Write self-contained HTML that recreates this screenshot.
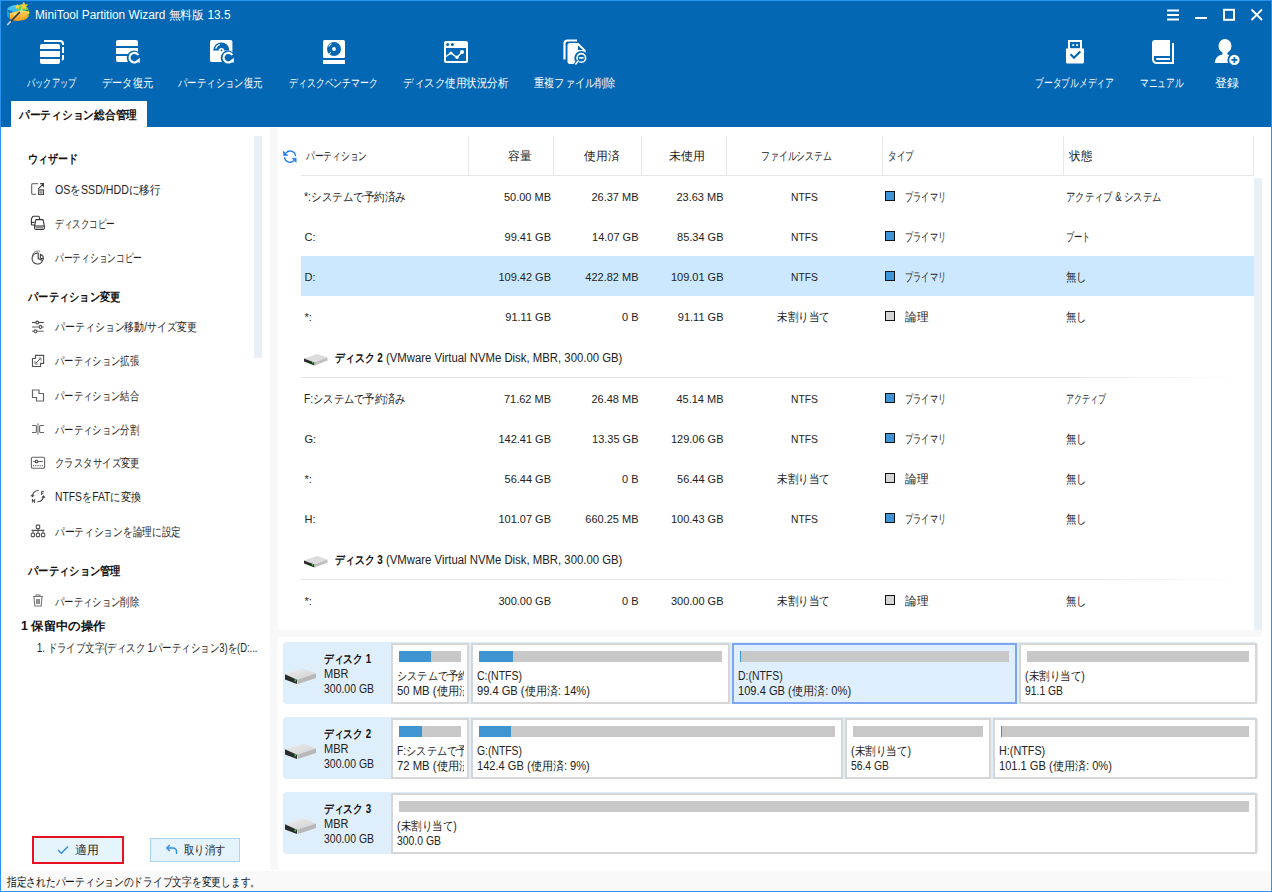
<!DOCTYPE html>
<html><head><meta charset="utf-8">
<style>
*{margin:0;padding:0;box-sizing:border-box}
html,body{width:1272px;height:892px;overflow:hidden;background:#fff}
body{position:relative;font-family:"Liberation Sans",sans-serif;font-size:12px;color:#222}
.a{position:absolute}
.t{position:absolute;white-space:nowrap;line-height:14px}
#win{position:absolute;left:0;top:0;width:1272px;height:892px;border:1px solid #2a93ee;background:#fff}
#hdr{position:absolute;left:1px;top:1px;width:1270px;height:126px;background:#0467b3}
.wt{color:#fff}
.tb{position:absolute;top:77px;color:#fff;font-size:12px;line-height:14px;white-space:nowrap;transform:translateX(-50%)}
.ic{position:absolute}
#tab{position:absolute;left:11px;top:101px;width:136px;height:26px;background:#fff}
#left{position:absolute;left:1px;top:127px;width:269px;height:744px;background:#fff}
#div1{position:absolute;left:270px;top:128px;width:8px;height:742px;background:#f8f8f8}
#tbl{position:absolute;left:278px;top:127px;width:993px;height:503px;background:#fff}
#band{position:absolute;left:278px;top:630px;width:984px;height:7px;background:#f8f8f8}
#map{position:absolute;left:278px;top:637px;width:993px;height:234px;background:#fff}
#status{position:absolute;left:2px;top:871px;width:1268px;height:20px;background:#f9f9f9}
.sb{position:absolute;background:#e8eff7}
.hd{font-weight:bold;color:#111}
.li{color:#1e1e1e}
.sel{position:absolute;left:301px;top:256px;width:953px;height:40px;background:#cce8ff}
.r{text-align:right}
.num{font-size:11px}
.sq{position:absolute;width:10px;height:10px;border:1px solid #111}
.dk{position:absolute;left:283px;width:975px;height:62px;background:#dfeefb;border-radius:4px}
.pb{position:absolute;border:2px solid #d6d6d6;background:#fff;overflow:hidden}
.bar{position:absolute;left:6px;top:6px;height:11px;background:#c8c8c8}
.bar i{position:absolute;left:0;top:0;height:11px;background:#3e95d1}
.clip{position:absolute;left:0;top:0;right:3px;bottom:0;overflow:hidden}
.pt{position:absolute;left:3px;white-space:nowrap;line-height:14px;color:#222}
</style></head><body>
<div id="win"></div>
<div id="hdr"></div>
<div id="tab"></div>
<!-- title bar -->
<svg class="a" style="left:0px;top:0px" width="34" height="28" viewBox="0 0 34 28">
 <defs>
  <linearGradient id="ao" x1="0" y1="0" x2="0" y2="1"><stop offset="0" stop-color="#ffd35a"/><stop offset="1" stop-color="#f59a1b"/></linearGradient>
  <linearGradient id="ac" x1="0" y1="0" x2="0" y2="1"><stop offset="0" stop-color="#5fd0f7"/><stop offset="1" stop-color="#1ba6ea"/></linearGradient>
 </defs>
 <path d="M7 9.5 A11 5 0 0 1 18 5 L18 14 Z" fill="url(#ac)"/>
 <path d="M7 9.5 V16 A11 6 0 0 0 10 19 L10 13Z" fill="#16a0e6"/>
 <path d="M18 5 A11 5 0 0 1 28.7 9.5 L18 13Z" fill="#5cd25a"/>
 <path d="M10 13 L18 11 L28.7 11 V16 A11 6 0 0 1 10 19 Z" fill="url(#ao)"/>
 <path d="M28.7 9.5 V16 A3 3 0 0 1 27.5 17.5 V11Z" fill="#4cbf4a"/>
 <path d="M23.8 1.8 l1.25 2.6 2.85 .35 -2.1 1.95 .55 2.8 -2.55 -1.4 -2.55 1.4 .55 -2.8 -2.1 -1.95 2.85 -.35z" fill="#fbd440" stroke="#e9b520" stroke-width=".4"/>
 <path d="M17.5 3.8 l.85 1.75 1.95 .25 -1.45 1.3 .4 1.9 -1.75 -.95 -1.75 .95 .4 -1.9 -1.45 -1.3 1.95 -.25z" fill="#fbd440"/>
 <path d="M28.2 10.8 l.6 1.2 1.3 .2 -1 .9 .25 1.3 -1.15 -.65 -1.15 .65 .25 -1.3 -1 -.9 1.3 -.2z" fill="#fbd440"/>
 <path d="M15 12 l.6 1.2 1.3 .2 -1 .9 .25 1.3 -1.15 -.65 -1.15 .65 .25 -1.3 -1 -.9 1.3 -.2z" fill="#fde27a"/>
 <line x1="7.2" y1="25.1" x2="22.4" y2="9.4" stroke="#d6d6d6" stroke-width="1.5"/>
 <line x1="10.8" y1="21.4" x2="19.8" y2="12.1" stroke="#3a3a3a" stroke-width="1.6"/>
</svg>
<div class="t f wt" style="left:34.6px;top:8px;font-size:12px;--w:195.5px">MiniTool Partition Wizard 無料版 13.5</div>
<svg class="a" style="left:1160px;top:6px" width="110" height="18" viewBox="0 0 110 18">
 <rect x="7" y="3.5" width="12" height="2" fill="#fff"/><rect x="7" y="8" width="12" height="2" fill="#fff"/><rect x="7" y="12.5" width="12" height="2" fill="#fff"/>
 <rect x="35" y="11" width="12" height="2" fill="#fff"/>
 <rect x="64" y="3.8" width="10" height="10" fill="none" stroke="#fff" stroke-width="2"/>
 <path d="M91.5 3.5 L102 14 M102 3.5 L91.5 14" stroke="#fff" stroke-width="1.8"/>
</svg>
<!-- toolbar icons -->
<svg class="a" style="left:40px;top:40px" width="24" height="24" viewBox="0 0 24 24" fill="#fff">
 <path d="M2 4 H18 A2 2 0 0 1 20 6 V9 H0 V6 A2 2 0 0 1 2 4Z"/>
 <rect x="0" y="11" width="20" height="6"/>
 <path d="M0 19 H20 V22 A2 2 0 0 1 18 24 H2 A2 2 0 0 1 0 22Z"/>
 <path d="M4 1 H20 A3 3 0 0 1 23 4 V5" fill="none" stroke="#fff" stroke-width="2"/>
 <path d="M23 7 V13 M23 15 V18 A2 2 0 0 1 22 20" fill="none" stroke="#fff" stroke-width="2"/>
</svg>
<svg class="a" style="left:116px;top:40px" width="26" height="24" viewBox="0 0 26 24" fill="#fff">
 <path d="M2 0 H20 A2 2 0 0 1 22 2 V6 H0 V2 A2 2 0 0 1 2 0Z"/>
 <rect x="0" y="8" width="22" height="6"/>
 <path d="M0 16 H22 V22 H2 A2 2 0 0 1 0 20Z"/>
 <circle cx="18" cy="17.8" r="7.3" fill="#0467b3"/>
 <path d="M22.3 15 A4.8 4.8 0 1 0 22.5 20" fill="none" stroke="#fff" stroke-width="2.1"/>
 <path d="M23.8 17.8 L23.8 22.8 L19.5 21.4Z"/>
</svg>
<svg class="a" style="left:210px;top:40px" width="26" height="24" viewBox="0 0 26 24" fill="#fff">
 <rect x="0" y="0" width="22.4" height="22" rx="1.8"/>
 <path d="M3.2 10.6 A8.1 8.1 0 0 1 19.4 10.6 Z" fill="#0467b3"/>
 <path d="M8.5 10.8 A2.9 2.9 0 0 1 14.3 10.8 Z" fill="#fff"/>
 <circle cx="11.4" cy="10.4" r="0.8" fill="#0467b3"/>
 <path d="M5.7 8.6 A6 6 0 0 1 10 4.4" fill="none" stroke="#fff" stroke-width="1.3"/>
 <circle cx="18" cy="17.8" r="7.3" fill="#0467b3"/>
 <path d="M22.3 15 A4.8 4.8 0 1 0 22.5 20" fill="none" stroke="#fff" stroke-width="2.1"/>
 <path d="M23.8 17.8 L23.8 22.8 L19.5 21.4Z"/>
</svg>
<svg class="a" style="left:323px;top:40px" width="22" height="24" viewBox="0 0 22 24" fill="#fff">
 <rect x="0" y="0" width="22" height="18" rx="1.5"/>
 <circle cx="11" cy="9" r="7" fill="#0467b3"/>
 <circle cx="11" cy="9" r="1.9"/>
 <path d="M5.8 6.5 A5.5 5.5 0 0 1 8.4 3.8" fill="none" stroke="#fff" stroke-width="1.2"/>
 <path d="M8 12 L5 15.5" stroke="#fff" stroke-width="1"/>
 <rect x="0" y="20" width="22" height="4"/>
</svg>
<svg class="a" style="left:444px;top:41px" width="24" height="22" viewBox="0 0 24 22" fill="#fff">
 <rect x="0" y="0" width="24" height="22" rx="2"/>
 <rect x="2" y="7" width="20" height="13" fill="#0467b3"/>
 <circle cx="3.6" cy="3.4" r="1.5" fill="#0467b3"/><circle cx="8.4" cy="3.4" r="1.5" fill="#0467b3"/>
 <polyline points="2,15.5 7,12 13,16.5 18,11" fill="none" stroke="#fff" stroke-width="1.5"/>
 <circle cx="7" cy="12" r="1.6"/><circle cx="13" cy="16.3" r="1.7"/><circle cx="18" cy="11" r="2"/>
</svg>
<svg class="a" style="left:563px;top:39px" width="26" height="27" viewBox="0 0 26 27" fill="#fff">
 <path d="M1.5 20.5 V4.5 A3 3 0 0 1 4.5 1.5 H14" fill="none" stroke="#fff" stroke-width="2.2"/>
 <path d="M7 4 H15.5 L22.6 11 V22.5 A2.5 2.5 0 0 1 20 25 H7 A2.5 2.5 0 0 1 4.5 22.5 V6.5 A2.5 2.5 0 0 1 7 4Z"/>
 <path d="M15 6.5 V11 H20Z" fill="#0467b3"/>
 <circle cx="18.3" cy="18.9" r="7" fill="#0467b3"/>
 <circle cx="18.3" cy="18.9" r="4.3" fill="none" stroke="#fff" stroke-width="1.6"/>
 <rect x="16" y="18.1" width="4.6" height="1.6"/>
 <path d="M15.4 21.8 L12 25.8" stroke="#0467b3" stroke-width="3.4"/><path d="M15.4 21.8 L12.4 25.4" stroke="#fff" stroke-width="1.6"/>
</svg>
<svg class="a" style="left:1066px;top:40px" width="18" height="24" viewBox="0 0 18 24" fill="#fff">
 <rect x="2" y="0" width="14" height="9"/>
 <rect x="4" y="2" width="10" height="6.4" fill="#0467b3"/>
 <rect x="6.2" y="4.3" width="2" height="1.6"/><rect x="10" y="4.3" width="2" height="1.6"/>
 <path d="M0 8.4 H18 V22 A1.6 1.6 0 0 1 16.4 23.6 H1.6 A1.6 1.6 0 0 1 0 22Z"/>
 <polyline points="4.5,14.3 8,17.8 14.3,11.5" fill="none" stroke="#0467b3" stroke-width="2"/>
</svg>
<svg class="a" style="left:1152px;top:40px" width="22" height="24" viewBox="0 0 22 24" fill="#fff">
 <path d="M3 0 H18 V16 H0 V3 A3 3 0 0 1 3 0Z"/>
 <path d="M1 10 V19.5 A3.5 3.5 0 0 0 4.5 23 H21 V3" fill="none" stroke="#fff" stroke-width="2"/>
 <path d="M5 18 H18 V20 H5 A1 1 0 0 1 5 18Z"/>
</svg>
<svg class="a" style="left:1214px;top:38px" width="26" height="28" viewBox="0 0 26 28" fill="#fff">
 <ellipse cx="11" cy="8" rx="6.5" ry="7"/>
 <rect x="8.5" y="13" width="5" height="4"/>
 <path d="M0.5 25 Q1.5 17 9 16.5 H13 Q17 17 20 19 V25Z"/>
 <circle cx="20.4" cy="21.9" r="7" fill="#0467b3"/>
 <circle cx="20.4" cy="21.9" r="5.2"/>
 <path d="M20.4 18.9 V24.9 M17.4 21.9 H23.4" stroke="#0467b3" stroke-width="1.7"/>
</svg>
<!-- toolbar labels -->
<div class="t f wt" style="left:26.9px;top:75.5px;--w:49.1px">バックアップ</div>
<div class="t f wt" style="left:101.8px;top:75.5px;--w:51.2px">データ復元</div>
<div class="t f wt" style="left:178px;top:75.5px;--w:84.5px">パーティション復元</div>
<div class="t f wt" style="left:288.5px;top:75.5px;--w:88.8px">ディスクベンチマーク</div>
<div class="t f wt" style="left:402.8px;top:75.5px;--w:105.2px">ディスク使用状況分析</div>
<div class="t f wt" style="left:533.8px;top:75.5px;--w:81.7px">重複ファイル削除</div>
<div class="t f wt" style="left:1034.8px;top:75.5px;--w:78.9px">ブータブルメディア</div>
<div class="t f wt" style="left:1140px;top:75.5px;--w:43.7px">マニュアル</div>
<div class="t f wt" style="left:1214.5px;top:75.5px;--w:23.8px">登録</div>
<div class="t f hd" style="left:19.4px;top:107.8px;font-size:12px;--w:118.2px">パーティション総合管理</div>

<div id="left"></div>
<div id="div1"></div>
<div class="t f hd" style="left:27.5px;top:151.5px;--w:50.0px">ウィザード</div>
<div class="t f li" style="left:55px;top:182.6px;--w:105.7px">OSをSSD/HDDに移行</div>
<div class="t f li" style="left:55px;top:216.8px;--w:59.9px">ディスクコピー</div>
<div class="t f li" style="left:55px;top:250.9px;--w:87.0px">パーティションコピー</div>
<div class="t f hd" style="left:28px;top:289.9px;--w:92.6px">パーティション変更</div>
<div class="t f li" style="left:55px;top:320.2px;--w:141.6px">パーティション移動/サイズ変更</div>
<div class="t f li" style="left:55px;top:354.3px;--w:84.1px">パーティション拡張</div>
<div class="t f li" style="left:55px;top:388.5px;--w:84.1px">パーティション結合</div>
<div class="t f li" style="left:55px;top:422.6px;--w:84.1px">パーティション分割</div>
<div class="t f li" style="left:55px;top:456.2px;--w:84.8px">クラスタサイズ変更</div>
<div class="t f li" style="left:55px;top:490.2px;--w:86.3px">NTFSをFATに変換</div>
<div class="t f li" style="left:55px;top:524.5px;--w:126.0px">パーティションを論理に設定</div>
<div class="t f hd" style="left:28px;top:564.0px;--w:92.7px">パーティション管理</div>
<div class="t f li" style="left:55px;top:594.7px;--w:84.2px">パーティション削除</div>
<div class="t f hd" style="left:20.6px;top:619.2px;--w:84.6px">1 保留中の操作</div>
<div class="t f li" style="left:37.4px;top:640.6px;--w:220.5px">1. ドライブ文字(ディスク 1パーティション3)を(D:...</div>
<svg class="a" style="left:28px;top:180px" width="20" height="20" viewBox="0 0 20 20" fill="none" stroke-linecap="round">
 <path d="M9.6 3.7 H5 Q3.6 3.7 3.6 5.1 V13 Q3.6 14.3 5 14.3 H7.8" stroke="#7a7a7a" stroke-width="1.3"/>
 <path d="M10.6 8.6 L15 4.2 M12.6 3.7 H15.4 V6.6" stroke="#444" stroke-width="1.2"/>
 <rect x="10.6" y="9.9" width="4.9" height="4.5" stroke="#444" stroke-width="1.1"/>
 <path d="M13 9.9 V14.4 M10.6 12.1 H15.5" stroke="#777" stroke-width="0.9"/>
</svg>
<svg class="a" style="left:28px;top:213px" width="20" height="20" viewBox="0 0 20 20" fill="none" stroke="#333" stroke-width="1.1" stroke-linejoin="round">
 <path d="M7.2 12 H4.2 Q3.4 12 3.4 11 V6 L4.4 3.9 Q4.7 3.3 5.4 3.3 H10.3 Q10.9 3.3 11.2 4 L11.8 6.3"/>
 <path d="M3.5 9.4 H6.6"/>
 <path d="M8.5 6.6 H14.4 Q15 6.6 15.3 7.3 L16.3 13 V15.3 Q16.3 16.5 15 16.5 H7.8 Q6.6 16.5 6.6 15.3 V13 L7.6 7.3 Q7.9 6.6 8.5 6.6Z" fill="#fff"/>
 <path d="M6.6 13 H16.3"/>
 <rect x="7.8" y="14" width="7.3" height="1.5" fill="#888" stroke="none"/>
</svg>
<svg class="a" style="left:28px;top:247px" width="20" height="20" viewBox="0 0 20 20" fill="none" stroke="#444" stroke-width="1.1">
 <path d="M4.4 9.2 A5.6 5.6 0 0 1 12.6 4.6" stroke="#666" stroke-dasharray="1.6 .6"/>
 <path d="M10.2 6.2 A5.4 5.4 0 1 0 14.6 13.4 L10.2 11.6 Z" stroke-width="1.2"/>
 <path d="M12.4 7.2 A4.6 4.6 0 0 1 15.4 12 L12.4 11 Z" stroke-width="1.1"/>
</svg>
<svg class="a" style="left:28px;top:316px" width="20" height="20" viewBox="0 0 20 20" fill="none" stroke-width="1.1">
 <path d="M4 6.5 H15.8" stroke="#444"/><circle cx="9.2" cy="6.5" r="1.4" fill="#fff" stroke="#444"/>
 <path d="M4 11 H15.8" stroke="#a0a0a0" stroke-width="1.7"/><ellipse cx="12.5" cy="11" rx="1.2" ry="1.6" fill="#fff" stroke="#555"/>
 <path d="M4 15.3 H15.8" stroke="#8a8a8a" stroke-width="1.3"/><circle cx="7.5" cy="15.3" r="1.4" fill="#fff" stroke="#555"/>
</svg>
<svg class="a" style="left:28px;top:351px" width="20" height="20" viewBox="0 0 20 20" fill="none" stroke="#555" stroke-width="1.15">
 <path d="M4.5 7.5 H7.5 V4.4 H15.6 V12.4 H12.5 V15.5 H4.5 Z"/>
 <path d="M7.6 12.4 L12.6 7.4" stroke-width="1"/><path d="M7 10 V13 H10 M10.5 7 H13 V9.6" stroke="#777" stroke-width="1"/>
</svg>
<svg class="a" style="left:31px;top:389px" width="14" height="13" viewBox="0 0 14 13" fill="none" stroke="#666" stroke-width="1.2">
 <path d="M1.5 1 H8 V4.5 H12.5 V12 H5.5 V8.5 H1.5 Z"/>
</svg>
<svg class="a" style="left:28px;top:419px" width="20" height="20" viewBox="0 0 20 20" fill="none" stroke-width="1.1">
 <path d="M4 6.5 H7.3 Q8.4 6.5 8.4 7.6 V12.4 Q8.4 13.5 7.3 13.5 H4 M16 6.5 H12.7 Q11.6 6.5 11.6 7.6 V12.4 Q11.6 13.5 12.7 13.5 H16" stroke="#666"/>
 <path d="M10 4.2 V15.7" stroke="#aaa" stroke-width="1.7"/>
</svg>
<svg class="a" style="left:28px;top:453px" width="20" height="20" viewBox="0 0 20 20" fill="none" stroke="#666" stroke-width="1.1">
 <rect x="3.4" y="4.3" width="13.2" height="11" rx="1.3"/>
 <path d="M5.2 8.5 H14.8"/><circle cx="8.5" cy="8.5" r="1.3" fill="#fff" stroke="#444"/>
 <path d="M5 12.6 H15" stroke-dasharray="1.1 1.1" stroke-width="1.2"/>
</svg>
<svg class="a" style="left:28px;top:486px" width="20" height="20" viewBox="0 0 20 20" fill="none" stroke="#444" stroke-width="1.1">
 <path d="M10.5 4.5 A5.8 5.8 0 0 0 4.5 9.8"/><path d="M2.9 9.2 H6.1 L4.5 11.2Z" fill="#444" stroke-width=".6"/>
 <path d="M9.4 15.8 A5.8 5.8 0 0 0 15.5 10.8"/><path d="M13.9 11.4 H17.1 L15.5 9.5Z" fill="#444" stroke-width=".6"/>
 <path d="M13.6 9 V5.4 H15.8 M13.6 7.3 H15.4" stroke-width="1"/>
 <path d="M4.4 16.6 V13.1 L6.6 16.6 V13.1" stroke-width="1"/>
</svg>
<svg class="a" style="left:28px;top:520px" width="20" height="20" viewBox="0 0 20 20" fill="none" stroke="#555" stroke-width="1.1">
 <rect x="8.3" y="5.1" width="3.4" height="3.5" rx=".6"/><path d="M10 8.6 V10.4 M3.6 10.4 H16.4 M4.9 10.4 V13.2 M10 10.4 V13.2 M15.1 10.4 V13.2"/>
 <rect x="3.3" y="13.2" width="3.2" height="3.4" rx=".6"/><rect x="8.4" y="13.2" width="3.2" height="3.4" rx=".6"/><rect x="13.5" y="13.2" width="3.2" height="3.4" rx=".6"/>
</svg>
<svg class="a" style="left:32px;top:594px" width="12" height="13" viewBox="0 0 12 13" fill="none" stroke="#777" stroke-width="1.1">
 <path d="M1 2.5 H11 M4 2.5 V1 H8 V2.5"/><path d="M2 2.5 L2.8 12 H9.2 L10 2.5"/><path d="M4.7 5 V10 M6 5 V10 M7.3 5 V10"/>
</svg>
<div class="sb" style="left:254px;top:136px;width:8px;height:222px"></div>

<div id="tbl"></div>
<div class="a" style="left:301px;top:175px;width:953px;height:1px;background:#e6e6e6"></div>
<div class="a" style="left:468px;top:136px;width:1px;height:39px;background:#e8e8e8"></div>
<div class="a" style="left:553px;top:136px;width:1px;height:39px;background:#e8e8e8"></div>
<div class="a" style="left:641px;top:136px;width:1px;height:39px;background:#e8e8e8"></div>
<div class="a" style="left:726px;top:136px;width:1px;height:39px;background:#e8e8e8"></div>
<div class="a" style="left:882px;top:136px;width:1px;height:39px;background:#e8e8e8"></div>
<div class="a" style="left:1063px;top:136px;width:1px;height:39px;background:#e8e8e8"></div>
<div class="a" style="left:1253px;top:136px;width:1px;height:40px;background:#e6e6e6"></div>
<svg class="a" style="left:280px;top:146px" width="20" height="20" viewBox="0 0 20 20" fill="none" stroke="#1f7ce8" stroke-width="1.4">
 <path d="M15.6 10.3 A5.5 5.5 0 0 0 6 6.9"/><path d="M3.3 5 L3.5 9.5 L8 9.5Z" fill="#1f7ce8" stroke-width=".5"/>
 <path d="M4.5 11.2 A5.5 5.5 0 0 0 14 14.4"/><path d="M12 12.2 L16.2 12.2 L16.2 16.4Z" fill="#1f7ce8" stroke-width=".5"/>
</svg>
<div class="t f " style="left:306.3px;top:148.5px;--w:61.2px">パーティション</div>
<div class="t f " style="left:508.3px;top:148.5px;--w:23.7px">容量</div>
<div class="t f " style="left:584.4px;top:148.5px;--w:35.3px">使用済</div>
<div class="t f " style="left:669.3px;top:148.5px;--w:36.0px">未使用</div>
<div class="t f " style="left:760.9px;top:148.5px;--w:70.8px">ファイルシステム</div>
<div class="t f " style="left:888.3px;top:148.5px;--w:25.8px">タイプ</div>
<div class="t f " style="left:1068.7px;top:148.5px;--w:23.0px">状態</div>
<div class="sel"></div>
<div class="t f " style="left:304px;top:190.0px;--w:101.6px">*:システムで予約済み</div>
<div class="t num" style="left:431px;top:190.0px;width:120px;text-align:right">50.00 MB</div>
<div class="t num" style="left:518.5px;top:190.0px;width:120px;text-align:right">26.37 MB</div>
<div class="t num" style="left:603.5px;top:190.0px;width:120px;text-align:right">23.63 MB</div>
<div class="t f num" style="left:791.2px;top:190.0px;--w:26.8px">NTFS</div>
<div class="sq" style="left:885px;top:191px;background:#3d94d6"></div>
<div class="t f " style="left:904.9px;top:190.0px;--w:41.0px">プライマリ</div>
<div class="t f " style="left:1065.5px;top:190.0px;--w:95.5px">アクティブ & システム</div>
<div class="t num" style="left:304.5px;top:230.0px">C:</div>
<div class="t num" style="left:431px;top:230.0px;width:120px;text-align:right">99.41 GB</div>
<div class="t num" style="left:518.5px;top:230.0px;width:120px;text-align:right">14.07 GB</div>
<div class="t num" style="left:603.5px;top:230.0px;width:120px;text-align:right">85.34 GB</div>
<div class="t f num" style="left:791.2px;top:230.0px;--w:26.8px">NTFS</div>
<div class="sq" style="left:885px;top:231px;background:#3d94d6"></div>
<div class="t f " style="left:904.9px;top:230.0px;--w:41.0px">プライマリ</div>
<div class="t f " style="left:1065.5px;top:230.0px;--w:24.7px">ブート</div>
<div class="t num" style="left:304.5px;top:270.0px">D:</div>
<div class="t num" style="left:431px;top:270.0px;width:120px;text-align:right">109.42 GB</div>
<div class="t num" style="left:518.5px;top:270.0px;width:120px;text-align:right">422.82 MB</div>
<div class="t num" style="left:603.5px;top:270.0px;width:120px;text-align:right">109.01 GB</div>
<div class="t f num" style="left:791.2px;top:270.0px;--w:26.8px">NTFS</div>
<div class="sq" style="left:885px;top:271px;background:#3d94d6"></div>
<div class="t f " style="left:904.9px;top:270.0px;--w:41.0px">プライマリ</div>
<div class="t f " style="left:1065.5px;top:270.0px;--w:20.8px">無し</div>
<div class="t num" style="left:304.5px;top:310.0px">*:</div>
<div class="t num" style="left:431px;top:310.0px;width:120px;text-align:right">91.11 GB</div>
<div class="t num" style="left:518.5px;top:310.0px;width:120px;text-align:right">0 B</div>
<div class="t num" style="left:603.5px;top:310.0px;width:120px;text-align:right">91.11 GB</div>
<div class="t f " style="left:777.3px;top:310.0px;--w:53.1px">未割り当て</div>
<div class="sq" style="left:885px;top:311px;background:#d4d4d4"></div>
<div class="t f " style="left:904.6px;top:310.0px;--w:23.4px">論理</div>
<div class="t f " style="left:1065.5px;top:310.0px;--w:20.8px">無し</div>
<div class="t f " style="left:304px;top:391.5px;--w:101.6px">F:システムで予約済み</div>
<div class="t num" style="left:431px;top:391.5px;width:120px;text-align:right">71.62 MB</div>
<div class="t num" style="left:518.5px;top:391.5px;width:120px;text-align:right">26.48 MB</div>
<div class="t num" style="left:603.5px;top:391.5px;width:120px;text-align:right">45.14 MB</div>
<div class="t f num" style="left:791.2px;top:391.5px;--w:26.8px">NTFS</div>
<div class="sq" style="left:885px;top:393px;background:#3d94d6"></div>
<div class="t f " style="left:904.9px;top:391.5px;--w:41.0px">プライマリ</div>
<div class="t f " style="left:1065.5px;top:391.5px;--w:40.0px">アクティブ</div>
<div class="t num" style="left:304.5px;top:431.5px">G:</div>
<div class="t num" style="left:431px;top:431.5px;width:120px;text-align:right">142.41 GB</div>
<div class="t num" style="left:518.5px;top:431.5px;width:120px;text-align:right">13.35 GB</div>
<div class="t num" style="left:603.5px;top:431.5px;width:120px;text-align:right">129.06 GB</div>
<div class="t f num" style="left:791.2px;top:431.5px;--w:26.8px">NTFS</div>
<div class="sq" style="left:885px;top:433px;background:#3d94d6"></div>
<div class="t f " style="left:904.9px;top:431.5px;--w:41.0px">プライマリ</div>
<div class="t f " style="left:1065.5px;top:431.5px;--w:20.8px">無し</div>
<div class="t num" style="left:304.5px;top:471.5px">*:</div>
<div class="t num" style="left:431px;top:471.5px;width:120px;text-align:right">56.44 GB</div>
<div class="t num" style="left:518.5px;top:471.5px;width:120px;text-align:right">0 B</div>
<div class="t num" style="left:603.5px;top:471.5px;width:120px;text-align:right">56.44 GB</div>
<div class="t f " style="left:777.3px;top:471.5px;--w:53.1px">未割り当て</div>
<div class="sq" style="left:885px;top:473px;background:#d4d4d4"></div>
<div class="t f " style="left:904.6px;top:471.5px;--w:23.4px">論理</div>
<div class="t f " style="left:1065.5px;top:471.5px;--w:20.8px">無し</div>
<div class="t num" style="left:304.5px;top:511.5px">H:</div>
<div class="t num" style="left:431px;top:511.5px;width:120px;text-align:right">101.07 GB</div>
<div class="t num" style="left:518.5px;top:511.5px;width:120px;text-align:right">660.25 MB</div>
<div class="t num" style="left:603.5px;top:511.5px;width:120px;text-align:right">100.43 GB</div>
<div class="t f num" style="left:791.2px;top:511.5px;--w:26.8px">NTFS</div>
<div class="sq" style="left:885px;top:513px;background:#3d94d6"></div>
<div class="t f " style="left:904.9px;top:511.5px;--w:41.0px">プライマリ</div>
<div class="t f " style="left:1065.5px;top:511.5px;--w:20.8px">無し</div>
<div class="t num" style="left:304.5px;top:593.5px">*:</div>
<div class="t num" style="left:431px;top:593.5px;width:120px;text-align:right">300.00 GB</div>
<div class="t num" style="left:518.5px;top:593.5px;width:120px;text-align:right">0 B</div>
<div class="t num" style="left:603.5px;top:593.5px;width:120px;text-align:right">300.00 GB</div>
<div class="t f " style="left:777.3px;top:593.5px;--w:53.1px">未割り当て</div>
<div class="sq" style="left:885px;top:595px;background:#d4d4d4"></div>
<div class="t f " style="left:904.6px;top:593.5px;--w:23.4px">論理</div>
<div class="t f " style="left:1065.5px;top:593.5px;--w:20.8px">無し</div>
<svg class="a" style="left:303px;top:353px" width="26" height="14" viewBox="0 0 26 14">
 <path d="M1 5.5 L14 1 L24.5 4.5 L11.5 9.5Z" fill="#dcdcdc"/>
 <path d="M1 5.5 L11.5 9.5 V12.5 L1 8.5Z" fill="#2a2a2a"/>
 <path d="M11.5 9.5 L24.5 4.5 V7.5 L11.5 12.5Z" fill="#bdbdbd"/>
 <rect x="9" y="9" width="1.3" height="1.5" fill="#3c3"/>
</svg>
<div class="t f hd" style="left:334.5px;top:350.6px;--w:47.8px">ディスク 2</div>
<div class="t f " style="left:386.3px;top:350.6px;--w:236.4px">(VMware Virtual NVMe Disk, MBR, 300.00 GB)</div>
<div class="a" style="left:301px;top:377px;width:945px;height:1px;background:linear-gradient(90deg,#e3e3e3 0,#e3e3e3 80%,rgba(227,227,227,0) 100%)"></div>
<svg class="a" style="left:303px;top:555px" width="26" height="14" viewBox="0 0 26 14">
 <path d="M1 5.5 L14 1 L24.5 4.5 L11.5 9.5Z" fill="#dcdcdc"/>
 <path d="M1 5.5 L11.5 9.5 V12.5 L1 8.5Z" fill="#2a2a2a"/>
 <path d="M11.5 9.5 L24.5 4.5 V7.5 L11.5 12.5Z" fill="#bdbdbd"/>
 <rect x="9" y="9" width="1.3" height="1.5" fill="#3c3"/>
</svg>
<div class="t f hd" style="left:334.5px;top:552.6px;--w:47.8px">ディスク 3</div>
<div class="t f " style="left:386.3px;top:552.6px;--w:236.4px">(VMware Virtual NVMe Disk, MBR, 300.00 GB)</div>
<div class="a" style="left:301px;top:579px;width:945px;height:1px;background:linear-gradient(90deg,#e3e3e3 0,#e3e3e3 80%,rgba(227,227,227,0) 100%)"></div>
<div class="sb" style="left:1254px;top:178px;width:8px;height:452px"></div>
<div id="band"></div>
<div id="map"></div>
<div class="dk" style="top:642px"></div>
<svg class="a" style="left:284px;top:668px" width="34" height="18" viewBox="0 0 34 18">
 <defs><linearGradient id="gt1" x1="0" y1="0" x2="1" y2="1"><stop offset="0" stop-color="#eeeeee"/><stop offset="1" stop-color="#d0d0d0"/></linearGradient></defs>
 <path d="M1 6.3 L19.2 0.5 L32 5.5 L13 11.7Z" fill="url(#gt1)"/>
 <path d="M1 6.3 L13 11.7 V16 L1 11.5Z" fill="#2b2b2b"/>
 <path d="M13 11.7 L32 5.5 V10 L14 16Z" fill="#b8b8b8"/>
 <rect x="10.5" y="11.3" width="1.6" height="2.2" fill="#2ecc40"/>
</svg>
<div class="t f hd" style="left:324.2px;top:651.7px;--w:47.1px">ディスク 1</div>
<div class="t f num" style="left:324.2px;top:666.8px;--w:24.5px;font-size:12px">MBR</div>
<div class="t f num" style="left:324.2px;top:681.9px;--w:50.0px;font-size:12px">300.00 GB</div>
<div class="pb" style="left:391px;top:643px;width:78px;height:61px;"><div class="bar" style="width:62px"><i style="width:32px"></i></div><div class="clip"><div class="pt f" style="left:3.5px;top:23.8px;--w:92px">システムで予約済み</div><div class="pt f" style="left:3.5px;top:38.5px;--w:106px">50 MB (使用済: 53%)</div></div></div>
<div class="pb" style="left:471px;top:643px;width:259px;height:61px;"><div class="bar" style="width:243px"><i style="width:34px"></i></div><div class="clip"><div class="pt f" style="left:3.5px;top:23.8px;--w:45.1px">C:(NTFS)</div><div class="pt f" style="left:3.5px;top:38.5px;--w:112.9px">99.4 GB (使用済: 14%)</div></div></div>
<div class="pb" style="left:732px;top:643px;width:285px;height:61px;border-color:#7ea6f0;background:#e0efff;"><div class="bar" style="width:269px"><i style="width:1px"></i></div><div class="clip"><div class="pt f" style="left:3.5px;top:23.8px;--w:44.7px">D:(NTFS)</div><div class="pt f" style="left:3.5px;top:38.5px;--w:113.1px">109.4 GB (使用済: 0%)</div></div></div>
<div class="pb" style="left:1019px;top:643px;width:238px;height:61px;"><div class="bar" style="width:222px"></div><div class="clip"><div class="pt f" style="left:3.5px;top:23.8px;--w:59.8px">(未割り当て)</div><div class="pt f" style="left:3.5px;top:38.5px;--w:38.0px">91.1 GB</div></div></div>
<div class="dk" style="top:717px"></div>
<svg class="a" style="left:284px;top:743px" width="34" height="18" viewBox="0 0 34 18">
 <defs><linearGradient id="gt2" x1="0" y1="0" x2="1" y2="1"><stop offset="0" stop-color="#eeeeee"/><stop offset="1" stop-color="#d0d0d0"/></linearGradient></defs>
 <path d="M1 6.3 L19.2 0.5 L32 5.5 L13 11.7Z" fill="url(#gt2)"/>
 <path d="M1 6.3 L13 11.7 V16 L1 11.5Z" fill="#2b2b2b"/>
 <path d="M13 11.7 L32 5.5 V10 L14 16Z" fill="#b8b8b8"/>
 <rect x="10.5" y="11.3" width="1.6" height="2.2" fill="#2ecc40"/>
</svg>
<div class="t f hd" style="left:324.2px;top:726.7px;--w:47.1px">ディスク 2</div>
<div class="t f num" style="left:324.2px;top:741.8px;--w:24.5px;font-size:12px">MBR</div>
<div class="t f num" style="left:324.2px;top:756.9px;--w:50.0px;font-size:12px">300.00 GB</div>
<div class="pb" style="left:391px;top:718px;width:78px;height:61px;"><div class="bar" style="width:62px"><i style="width:23px"></i></div><div class="clip"><div class="pt f" style="left:3.5px;top:23.8px;--w:101px">F:システムで予約済み</div><div class="pt f" style="left:3.5px;top:38.5px;--w:106px">72 MB (使用済: 37%)</div></div></div>
<div class="pb" style="left:471px;top:718px;width:372px;height:61px;"><div class="bar" style="width:356px"><i style="width:32px"></i></div><div class="clip"><div class="pt f" style="left:3.5px;top:23.8px;--w:45.0px">G:(NTFS)</div><div class="pt f" style="left:3.5px;top:38.5px;--w:112.8px">142.4 GB (使用済: 9%)</div></div></div>
<div class="pb" style="left:845px;top:718px;width:146px;height:61px;"><div class="bar" style="width:130px"></div><div class="clip"><div class="pt f" style="left:3.5px;top:23.8px;--w:60.1px">(未割り当て)</div><div class="pt f" style="left:3.5px;top:38.5px;--w:37.9px">56.4 GB</div></div></div>
<div class="pb" style="left:993px;top:718px;width:264px;height:61px;"><div class="bar" style="width:248px"><i style="width:1px"></i></div><div class="clip"><div class="pt f" style="left:3.5px;top:23.8px;--w:46.2px">H:(NTFS)</div><div class="pt f" style="left:3.5px;top:38.5px;--w:112.9px">101.1 GB (使用済: 0%)</div></div></div>
<div class="dk" style="top:792px"></div>
<svg class="a" style="left:284px;top:818px" width="34" height="18" viewBox="0 0 34 18">
 <defs><linearGradient id="gt3" x1="0" y1="0" x2="1" y2="1"><stop offset="0" stop-color="#eeeeee"/><stop offset="1" stop-color="#d0d0d0"/></linearGradient></defs>
 <path d="M1 6.3 L19.2 0.5 L32 5.5 L13 11.7Z" fill="url(#gt3)"/>
 <path d="M1 6.3 L13 11.7 V16 L1 11.5Z" fill="#2b2b2b"/>
 <path d="M13 11.7 L32 5.5 V10 L14 16Z" fill="#b8b8b8"/>
 <rect x="10.5" y="11.3" width="1.6" height="2.2" fill="#2ecc40"/>
</svg>
<div class="t f hd" style="left:324.2px;top:801.7px;--w:47.1px">ディスク 3</div>
<div class="t f num" style="left:324.2px;top:816.8px;--w:24.5px;font-size:12px">MBR</div>
<div class="t f num" style="left:324.2px;top:831.9px;--w:50.0px;font-size:12px">300.00 GB</div>
<div class="pb" style="left:391px;top:793px;width:866px;height:61px;"><div class="bar" style="width:850px"></div><div class="clip"><div class="pt f" style="left:3.5px;top:23.8px;--w:59.8px">(未割り当て)</div><div class="pt f" style="left:3.5px;top:38.5px;--w:43.9px">300.0 GB</div></div></div>
<div id="status"></div>


<div class="a" style="left:32px;top:836px;width:92px;height:28px;background:#e5f4fd;border:2px solid #e81123"></div>
<svg class="a" style="left:57px;top:845px" width="12" height="10" viewBox="0 0 12 10" fill="none" stroke="#2e8ee0" stroke-width="1.4"><polyline points="1,5 4.3,8.3 11,1.5"/></svg>
<div class="t f" style="left:75px;top:843.2px;--w:23.6px">適用</div>
<div class="a" style="left:150px;top:838px;width:90px;height:24px;background:#e5f3fc;border:1px solid #a9d3f2"></div>
<svg class="a" style="left:165px;top:844px" width="13" height="11" viewBox="0 0 13 11" fill="none" stroke="#2e8ee0" stroke-width="1.4"><path d="M2 4 H8 A3.5 3.5 0 0 1 11.5 7.5 V10"/><polyline points="4.8,1 1.8,4 4.8,7"/></svg>
<div class="t f" style="left:184px;top:843.2px;--w:41.2px">取り消す</div>
<div class="t f" style="left:7px;top:875px;--w:253px;color:#111">指定されたパーティションのドライブ文字を変更します。</div>
<script>
(function(){
 var els=document.querySelectorAll('.f');
 for(var i=0;i<els.length;i++){
  var e=els[i]; var w=parseFloat(e.style.getPropertyValue('--w'));
  if(!w) continue;
  var nw=e.scrollWidth; var r=e.getBoundingClientRect().width;
  var natural = r;
  if(natural>0){ e.style.transformOrigin='0 50%'; e.style.transform='scaleX('+(w/natural)+')'; }
 }
})();
</script>
</body></html>
